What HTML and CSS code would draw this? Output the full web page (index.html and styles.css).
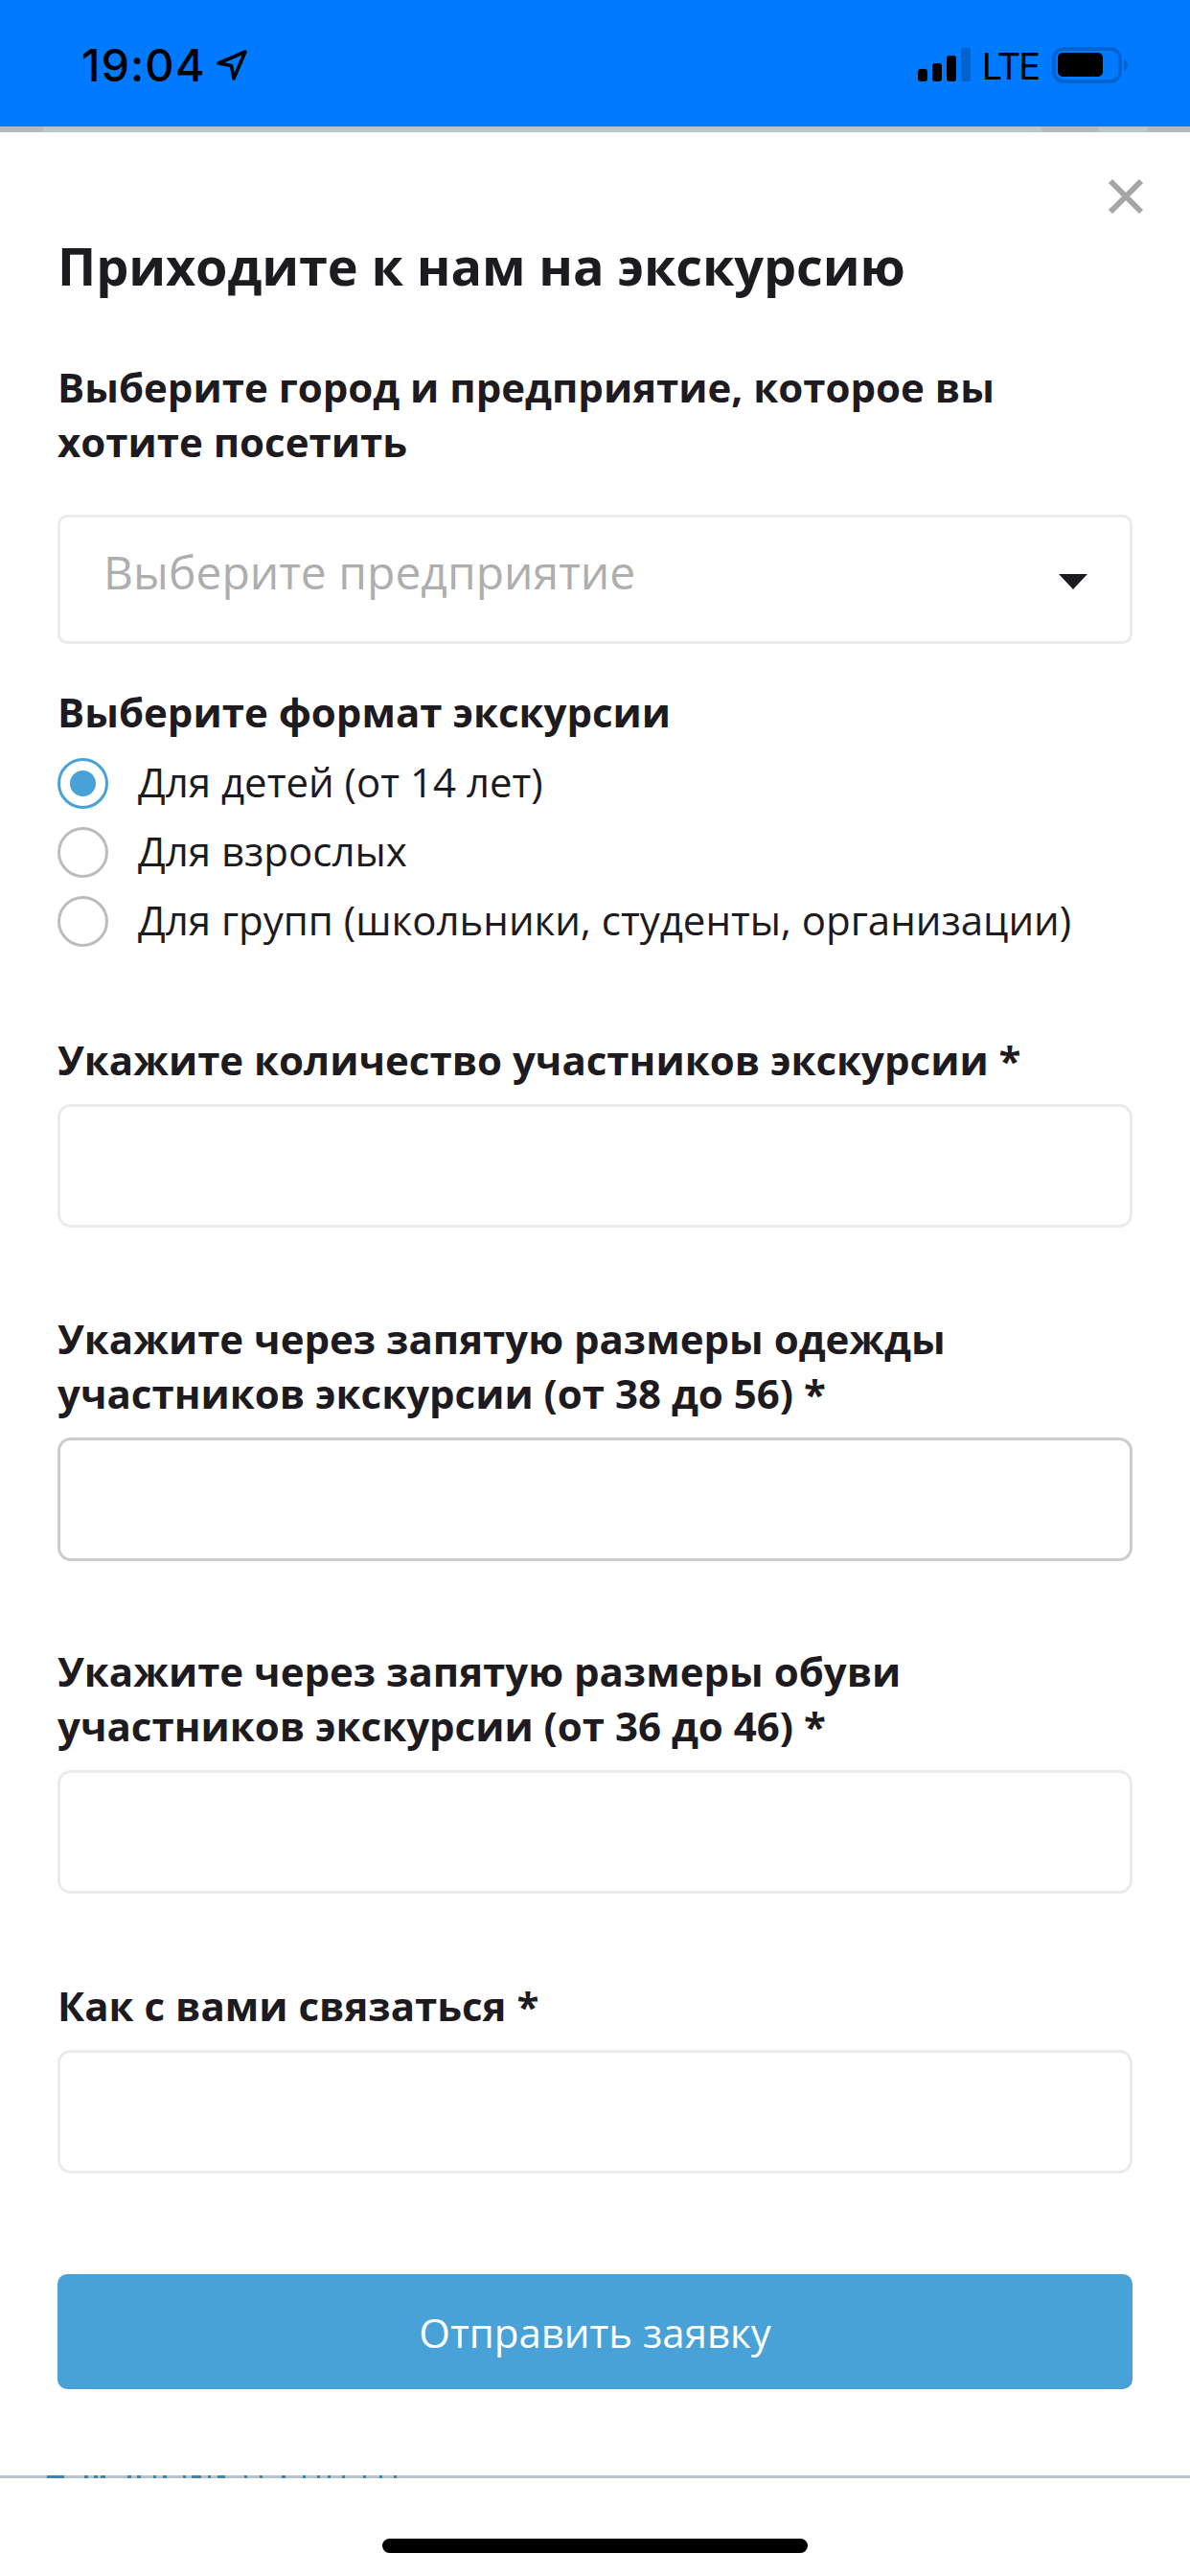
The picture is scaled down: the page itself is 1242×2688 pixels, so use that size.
FILE: index.html
```html
<!DOCTYPE html>
<html lang="ru">
<head>
    <meta charset="UTF-8">
    <meta name="viewport" content="width=device-width, initial-scale=1.0">
    <title>Приходите к нам на экскурсию</title>
    <link rel="stylesheet" href="styles.css">
</head>
<body>
<div class="statusBar">
    <div class="statusTime">
        <span>19:04</span>
        <svg class="locationIcon" width="32" height="32" viewBox="0 0 32 32"><path d="M2 14 L30 2 L18 30 L15.5 16.5 Z" fill="none" stroke="#000" stroke-width="3.6" stroke-linejoin="round"/></svg>
    </div>
    <div class="statusRight">
        <svg class="signalIcon" width="55" height="35" viewBox="0 0 55 35">
            <rect x="0" y="22" width="10" height="13" rx="3" fill="#000"/>
            <rect x="15" y="16" width="10" height="19" rx="3" fill="#000"/>
            <rect x="30" y="8" width="10" height="27" rx="3" fill="#000"/>
            <rect x="45" y="0" width="10" height="35" rx="3" fill="#0062cc"/>
        </svg>
        <span class="statusLte">LTE</span>
        <svg class="batteryIcon" width="80" height="38" viewBox="0 0 80 38">
            <rect x="2" y="2" width="69" height="34" rx="10" fill="none" stroke="#0062cc" stroke-width="3.5"/>
            <rect x="6" y="6" width="47" height="25" rx="5" fill="#000"/>
            <path d="M75 13 C78 14 79 17 79 19 C79 21 78 24 75 25 Z" fill="#0062cc"/>
        </svg>
    </div>
</div>
<div class="statusLine"></div>

<div class="modal">
    <div class="closeRow">
        <svg width="38" height="38" viewBox="0 0 38 38"><path d="M3 3 L35 35 M35 3 L3 35" stroke="#a6a6a6" stroke-width="6"/></svg>
    </div>
    <h1 class="modalTitle">Приходите к нам на экскурсию</h1>

    <div class="fieldLabel cityLabel">Выберите город и предприятие, которое вы хотите посетить</div>
    <div class="selectBox">
        <span class="selectText">Выберите предприятие</span>
        <span class="selectArrow"></span>
    </div>

    <div class="fieldLabel formatLabel">Выберите формат экскурсии</div>
    <div class="radioList">
        <div class="radioRow"><span class="radio radioOn"></span>Для детей (от 14 лет)</div>
        <div class="radioRow"><span class="radio"></span>Для взрослых</div>
        <div class="radioRow"><span class="radio"></span>Для групп (школьники, студенты, организации)</div>
    </div>

    <div class="fieldLabel peopleLabel">Укажите количество участников экскурсии *</div>
    <div class="textInput"></div>

    <div class="fieldLabel clothesLabel">Укажите через запятую размеры одежды участников экскурсии (от 38 до 56) *</div>
    <div class="textInput textInputFocus"></div>

    <div class="fieldLabel shoesLabel">Укажите через запятую размеры обуви участников экскурсии (от 36 до 46) *</div>
    <div class="textInput"></div>

    <div class="fieldLabel contactLabel">Как с вами связаться *</div>
    <div class="textInput"></div>

    <div class="submitBtn">Отправить заявку</div>
</div>

<!-- page text behind the modal only shows through this 3px line -->
<svg class="bottomLine" width="1242" height="3" viewBox="0 0 1242 3">
    <rect width="1242" height="3" fill="#b8c4cc"/>
    <g fill="#3a85b0">
        <rect x="49" width="18" height="3"/>
        <rect x="88" width="4" height="3"/>
        <rect x="98" width="4" height="3"/>
        <rect x="105" width="5" height="3"/>
        <rect x="133" width="4" height="3"/>
        <rect x="143" width="4" height="3"/>
        <rect x="160" width="3" height="3"/>
        <rect x="170" width="4" height="3"/>
        <rect x="191" width="3" height="3"/>
        <rect x="200" width="10" height="3"/>
        <rect x="217" width="3" height="3"/>
        <rect x="227" width="8" height="3"/>
        <rect x="255" width="3" height="3"/>
        <rect x="271" width="3" height="3"/>
        <rect x="294" width="4" height="3"/>
        <rect x="316" width="3" height="3"/>
        <rect x="331" width="3" height="3"/>
        <rect x="342" width="3" height="3"/>
        <rect x="357" width="3" height="3"/>
        <rect x="379" width="3" height="3"/>
        <rect x="396" width="3" height="3"/>
        <rect x="411" width="3" height="3"/>
    </g>
</svg>
<div class="bottomBar">
    <div class="homeIndicator"></div>
</div>
</body>
</html>
```

FILE: styles.css
```css
* {
    box-sizing: border-box;
}
body {
    margin: 0;
    padding: 0;
    width: 1242px;
    height: 2688px;
    overflow: hidden;
    background: white;
    font-family: "Open Sans", sans-serif;
    color: #1d1a20;
}

.statusBar {
    height: 132px;
    background: #007aff;
    display: flex;
    justify-content: space-between;
    padding: 49px 64px 0 85px;
    color: black;
}
.statusTime {
    display: flex;
    align-items: flex-start;
    gap: 11px;
    font-family: Inter, sans-serif;
    font-size: 47px;
    font-weight: 500;
    letter-spacing: 1px;
    line-height: 38px;
}
.locationIcon {
    margin-top: 3px;
}
.statusRight {
    display: flex;
    align-items: flex-start;
}
.signalIcon {
    margin-top: 1px;
}
.statusLte {
    margin: 0 14px 0 12px;
    font-family: Inter, sans-serif;
    font-size: 38px;
    letter-spacing: -2px;
    line-height: 40px;
}
.statusLine {
    height: 6px;
    background: linear-gradient(90deg, #b1bbc1 0 45px, #b9c6cc 45px 1087px, #b1bbc1 1087px 1147px, #b9c6cc 1147px 1197px, #b1bbc1 1197px);
}

.modal {
    height: 2445px;
    padding: 48px 60px 0;
    overflow: hidden;
}
.closeRow {
    display: flex;
    justify-content: flex-end;
    margin-right: -12px;
    height: 38px;
}
.modalTitle {
    margin: 18px 0 0;
    font-size: 54px;
    font-weight: 700;
    letter-spacing: -0.1px;
    line-height: 70px;
}
.fieldLabel {
    font-size: 42px;
    font-weight: 700;
    line-height: 57px;
}
.cityLabel {
    margin-top: 63px;
}
.selectBox {
    height: 135px;
    margin-top: 48px;
    border: 3px solid #ebebeb;
    border-radius: 10px;
    display: flex;
    justify-content: space-between;
    padding: 27px 44px 0 45px;
}
.selectText {
    font-size: 48px;
    line-height: 60px;
    color: #aeaeae;
}
.selectArrow {
    width: 0;
    height: 0;
    margin-top: 32px;
    border-left: 15px solid transparent;
    border-right: 15px solid transparent;
    border-top: 16px solid #1d1a20;
}
.formatLabel {
    margin-top: 42px;
}
.radioList {
    margin-top: 20px;
    display: flex;
    flex-direction: column;
    gap: 19px;
}
.radioRow {
    height: 53px;
    display: flex;
    align-items: flex-start;
    gap: 31px;
    font-size: 42px;
    line-height: 49px;
}
.radio {
    width: 53px;
    height: 53px;
    flex-shrink: 0;
    border: 3px solid #bdbdbd;
    border-radius: 50%;
}
.radioOn {
    border-color: #48a2d8;
    background: radial-gradient(circle, #48a2d8 0 13px, transparent 14px);
}
.peopleLabel {
    margin-top: 89px;
}
.textInput {
    height: 129px;
    margin-top: 18px;
    border: 3px solid #ebebeb;
    border-radius: 14px;
}
.textInputFocus {
    border-color: #cccccc;
}
.clothesLabel {
    margin-top: 87px;
}
.shoesLabel {
    margin-top: 86px;
}
.contactLabel {
    margin-top: 88px;
}
.submitBtn {
    height: 120px;
    margin-top: 105px;
    background: #48a2d8;
    border-radius: 10px;
    color: white;
    font-size: 42px;
    display: flex;
    justify-content: center;
    align-items: center;
}

.bottomLine {
    display: block;
}
.bottomBar {
    height: 102px;
    background: white;
    display: flex;
    justify-content: center;
    padding-top: 63px;
}
.homeIndicator {
    width: 444px;
    height: 15px;
    background: black;
    border-radius: 8px;
}
```
